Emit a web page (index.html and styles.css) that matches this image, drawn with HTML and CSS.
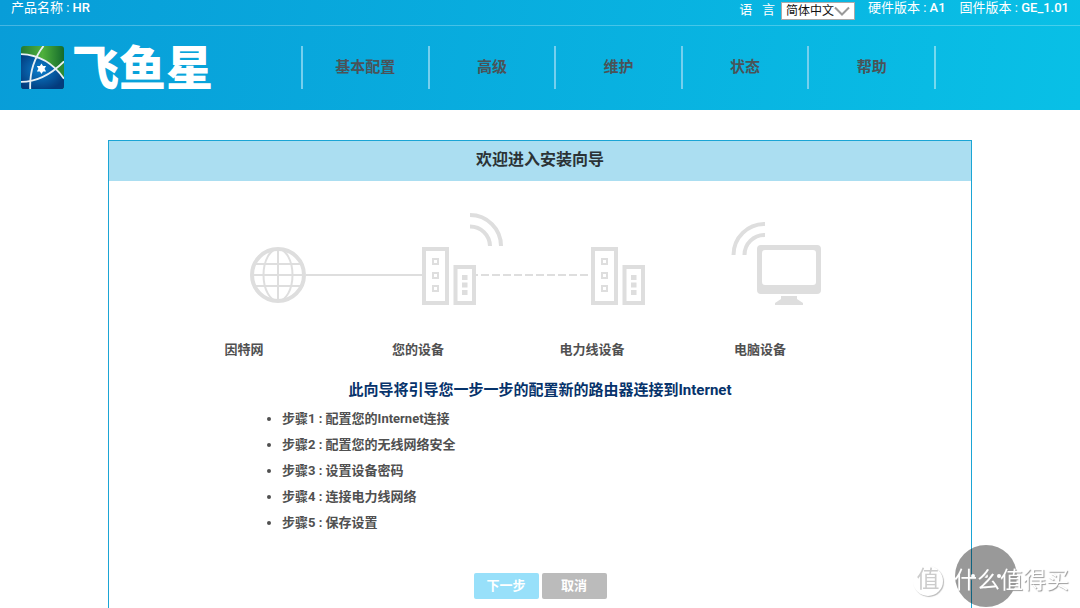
FILE: index.html
```html
<!DOCTYPE html>
<html lang="zh-CN">
<head>
<meta charset="utf-8">
<title>安装向导</title>
<link rel="stylesheet" href="styles.css">
</head>
<body>
<header class="header">
  <div class="topbar">
    <span class="product">产品名称 : <b>HR</b></span>
    <label class="lang-label" for="lang">语&nbsp; &nbsp;言</label>
    <span class="lang-box">
      <select id="lang" class="lang"><option>简体中文</option></select>
      <svg class="chevron" viewBox="0 0 16 10"><path d="M1 1.500L8 8.500L15 1.500" fill="none" stroke="#999" stroke-width="2"/></svg>
    </span>
    <span class="hardware">硬件版本 : <b>A1</b></span>
    <span class="firmware">固件版本 : <b>GE_1.01</b></span>
  </div>
  <div class="brandbar">
    <a class="brand" href="#">
      <svg class="mark" viewBox="0 0 42 42">
        <defs>
          <clipPath id="tile"><rect width="42" height="42" rx="3"/></clipPath>
          <linearGradient id="green" x1="0" y1="0" x2="1" y2="0"><stop offset="0" stop-color="#237a35"/><stop offset=".5" stop-color="#4fb03c"/><stop offset="1" stop-color="#146a2c"/></linearGradient>
          <radialGradient id="blue" cx=".45" cy=".45" r=".6"><stop offset="0" stop-color="#0b80cf"/><stop offset="1" stop-color="#033b7c"/></radialGradient>
        </defs>
        <g clip-path="url(#tile)">
          <rect width="42" height="42" fill="url(#green)"/>
          <path d="M0 8Q20 8 34 22L42 32V42H0Z" fill="url(#blue)"/>
          <path d="M34 22L42 15V31Z" fill="#2b8a35"/>
          <path d="M0 8Q26 9 42 32M0 35Q22 35 42 15M22 0Q8 18 9 42" fill="none" stroke="#e8f0f4" stroke-width="1.800"/>
          <path d="M20 17l1.500 2.600 3 0-1.500 2.600 1.500 2.600-3 0L20 27.400l-1.500-2.600-3 0 1.500-2.600-1.500-2.600 3 0Z" fill="#fff"/>
        </g>
      </svg>
      <span class="brand-name">飞鱼星</span>
    </a>
    <nav class="nav">
      <a href="#">基本配置</a>
      <a href="#">高级</a>
      <a href="#">维护</a>
      <a href="#">状态</a>
      <a href="#">帮助</a>
    </nav>
  </div>
</header>

<main class="panel">
  <h1 class="panel-title">欢迎进入安装向导</h1>
  <svg class="diagram" viewBox="250 210 572 98">
    <defs>
      <g id="router">
        <path d="M424 249h23v54h-23Z" fill="none" stroke="#dedede" stroke-width="4"/>
        <path d="M455.500 267h18.500v36h-18.500Z" fill="none" stroke="#dedede" stroke-width="4"/>
        <path d="M433 259h5v5h-5ZM433 273h5v5h-5ZM433 286h5v5h-5Z" fill="none" stroke="#dedede" stroke-width="2"/>
        <path d="M462 275h5.500v5h-5.500ZM462 282.500h5.500v5h-5.500ZM462 290h5.500v5h-5.500Z" fill="#dedede"/>
      </g>
    </defs>
    <g fill="none" stroke="#dedede" stroke-width="2">
      <circle cx="278" cy="275" r="26" stroke-width="4"/>
      <ellipse cx="278" cy="275" rx="14.500" ry="26"/>
      <path d="M278 249v52M252 275h52M256 264h44M256 286h44M306 275h116"/>
      <path d="M476 275h114" stroke-dasharray="8 3" stroke-dashoffset="6"/>
      <path d="M470 215A31 31 0 0 1 501 246M470 226.500A20 20 0 0 1 490 246M733.500 255A31 31 0 0 1 765 224M744.500 255A20 20 0 0 1 765 235" stroke-width="4"/>
    </g>
    <use href="#router"/>
    <use href="#router" x="169"/>
    <path fill="#dedede" fill-rule="evenodd" d="M761 245h56q4 0 4 4v41q0 4-4 4h-56q-4 0-4-4v-41q0-4 4-4ZM765 250q-3 0-3 3v29q0 3 3 3h48q3 0 3-3v-29q0-3-3-3Z"/>
    <path fill="#dedede" d="M781 296h16v3l6 4v2h-28v-2l6-4Z"/>
  </svg>
  <div class="labels">
    <span>因特网</span><span>您的设备</span><span>电力线设备</span><span>电脑设备</span>
  </div>
  <h2 class="intro">此向导将引导您一步一步的配置新的路由器连接到Internet</h2>
  <ul class="steps">
    <li>步骤1 : 配置您的Internet连接</li>
    <li>步骤2 : 配置您的无线网络安全</li>
    <li>步骤3 : 设置设备密码</li>
    <li>步骤4 : 连接电力线网络</li>
    <li>步骤5 : 保存设置</li>
  </ul>
  <div class="actions">
    <button class="btn next" type="button">下一步</button>
    <button class="btn cancel" type="button">取消</button>
  </div>
</main>

<button class="float" type="button" aria-label="更多"><i></i><i></i><i></i></button>
<div class="watermark"><span class="seal">值</span><span>什么值得买</span></div>
</body>
</html>
```
FILE: styles.css
```css
* { box-sizing: border-box; }
body {
  margin: 0;
  min-height: 100vh;
  display: flex;
  flex-direction: column;
  background: #fff;
  color: #505050;
  font: 700 13px/16px Roboto, "Noto Sans CJK SC", sans-serif;
}
a { color: inherit; text-decoration: none; }
.header { background: linear-gradient(100deg, #089dd8, #09c0e6); }
.topbar {
  display: flex;
  align-items: flex-start;
  height: 26px;
  padding: 0 11px;
  border-bottom: 1px solid rgba(255, 255, 255, .25);
  color: #fff;
  font-weight: 400;
}
.topbar b { font-weight: 500; }
.product { margin-right: auto; }
.lang-label { margin: 2px 6px 0 0; }
.lang-box { position: relative; margin: 2px 13px 0 0; }
.lang {
  display: block;
  appearance: none;
  width: 74px;
  height: 18px;
  padding: 0 0 0 4px;
  border: 1px solid #aaa;
  border-radius: 0;
  background: #fff;
  color: #111;
  font: 12px/16px Roboto, "Noto Sans CJK SC", sans-serif;
}
.chevron { position: absolute; right: 5px; top: 4px; width: 16px; height: 10px; pointer-events: none; }
.hardware { margin-right: 14px; }
.brandbar { display: flex; align-items: center; height: 84px; padding: 0 0 2px 21px; }
.brand { display: flex; align-items: center; gap: 8px; width: 280px; }
.mark { width: 43px; height: 43px; }
.brand-name { padding-top: 4px; color: #fff; font-size: 47px; font-weight: 900; line-height: 44px; }
.nav { display: flex; flex: 1; max-width: 635px; border-right: 2px solid #75d9ee; }
.nav a {
  flex: 1;
  border-left: 2px solid #75cfee;
  color: #4a5358;
  font-size: 15px;
  line-height: 43px;
  text-align: center;
}
.panel {
  flex: 1;
  width: 80%;
  margin: 30px auto 0;
  padding-bottom: 9px;
  border: 1px solid #1ba5d5;
  border-bottom: 0;
}
.panel-title {
  margin: 0;
  padding-bottom: 2px;
  background: #abdef1;
  color: #2b3336;
  font-size: 16px;
  line-height: 38px;
  text-align: center;
}
.diagram { display: block; width: 572px; height: 98px; margin: 29px 0 0 141px; }
.labels {
  display: grid;
  grid-template-columns: 174fr 174fr 174fr 162fr;
  margin: 34px 130px 0 48px;
  text-align: center;
}
.intro {
  margin: 22px 0 0;
  color: #07336b;
  font-size: 15px;
  line-height: 20px;
  text-align: center;
}
.steps { margin: 6px 0 0; padding-left: 173px; line-height: 26px; }
.actions { display: flex; justify-content: center; gap: 3px; margin-top: 37px; }
.btn {
  width: 65px;
  height: 26px;
  padding: 0;
  border: 0;
  border-radius: 2px;
  color: #fff;
  font: 700 13px/26px Roboto, "Noto Sans CJK SC", sans-serif;
}
.next { background: #98e0fa; }
.cancel { background: #bbb; }
.float {
  position: fixed;
  right: 63px;
  bottom: 1px;
  display: flex;
  align-items: center;
  justify-content: center;
  gap: 9px;
  width: 62px;
  height: 62px;
  padding: 0;
  border: 0;
  border-radius: 50%;
  background: rgba(0, 0, 0, .4);
}
.float i { width: 4px; height: 4px; border-radius: 50%; background: #fff; }
.watermark {
  position: fixed;
  right: 11px;
  bottom: 12px;
  display: flex;
  align-items: center;
  gap: 11px;
  color: #fff;
  font-size: 23px;
  font-weight: 400;
  line-height: 28px;
  text-shadow: 1px 1px 1px #999;
  pointer-events: none;
}
.seal {
  width: 30px;
  height: 30px;
  border-radius: 50%;
  box-shadow: 1px 1px 1px #bbb;
  color: #ccc;
  text-align: center;
  text-shadow: none;
}
```
